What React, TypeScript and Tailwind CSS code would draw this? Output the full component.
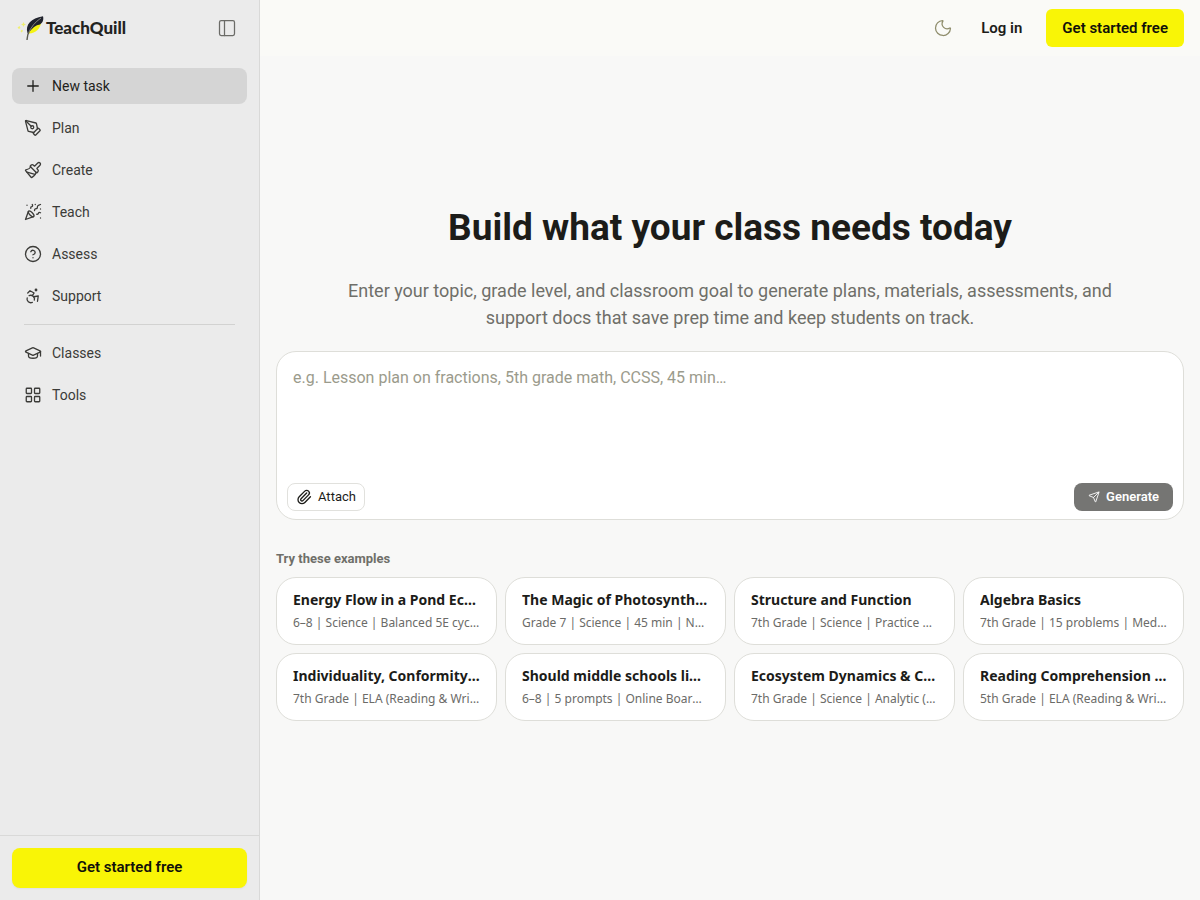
import {
  Accessibility,
  CircleHelp,
  GraduationCap,
  LayoutGrid,
  Moon,
  Paintbrush,
  PanelLeft,
  Paperclip,
  PartyPopper,
  PenTool,
  Plus,
  Send,
  type LucideIcon,
} from "lucide-react";

type NavItem = { label: string; icon: LucideIcon; active?: boolean };

const primaryNav: NavItem[] = [
  { label: "New task", icon: Plus, active: true },
  { label: "Plan", icon: PenTool },
  { label: "Create", icon: Paintbrush },
  { label: "Teach", icon: PartyPopper },
  { label: "Assess", icon: CircleHelp },
  { label: "Support", icon: Accessibility },
];

const secondaryNav: NavItem[] = [
  { label: "Classes", icon: GraduationCap },
  { label: "Tools", icon: LayoutGrid },
];

const examples = [
  { title: "Energy Flow in a Pond Ecosystem", meta: "6–8 | Science | Balanced 5E cycle lesson" },
  { title: "The Magic of Photosynthesis", meta: "Grade 7 | Science | 45 min | NGSS" },
  { title: "Structure and Function", meta: "7th Grade | Science | Practice worksheet" },
  { title: "Algebra Basics", meta: "7th Grade | 15 problems | Medium" },
  { title: "Individuality, Conformity & Society", meta: "7th Grade | ELA (Reading & Writing)" },
  { title: "Should middle schools limit phones?", meta: "6–8 | 5 prompts | Online Board discussion" },
  { title: "Ecosystem Dynamics & Change", meta: "7th Grade | Science | Analytic (4 levels)" },
  { title: "Reading Comprehension Quiz", meta: "5th Grade | ELA (Reading & Writing)" },
];

function Logo() {
  return (
    <a href="#" className="flex items-center gap-0.5 text-[#23231f]">
      <svg viewBox="0 0 28 28" className="h-7 w-7" aria-hidden="true">
        <path d="M12 20 C13 14 17 10 25 9 C24 15 20 19 13 19.500 Z" fill="#f4f313" />
        <path d="M11.500 19 C9 11 15 4 27 2.300 C28 6 26.500 9 24 10.500 C20 11 16 14 12.500 19 Z" fill="#20232d" />
        <path d="M25 4 C19 8 15 13 12 20" fill="none" stroke="#9a9a90" strokeWidth="0.8" />
        <path d="M13 18 C11.500 20 11.500 23 11 26" fill="none" stroke="#5b5b50" strokeWidth="1.4" />
        <path d="M7.500 8 L8.300 9.700 L10 10.500 L8.300 11.300 L7.500 13 L6.700 11.300 L5 10.500 L6.700 9.700Z M3.500 12 L4.500 14 L3 15 L1.500 13.500Z M6 15.500 L7 17 L5.500 18.500 L4.500 17Z" fill="#efef70" />
      </svg>
      <span className="font-['Lato'] text-[17px] font-black leading-7">TeachQuill</span>
    </a>
  );
}

function NavList({ items }: { items: NavItem[] }) {
  return (
    <ul className="flex flex-col gap-1.5">
      {items.map(({ label, icon: Icon, active }) => (
        <li key={label}>
          <a
            href="#"
            aria-current={active ? "page" : undefined}
            className={
              active
                ? "flex h-9 items-center gap-2.5 rounded-lg bg-[#d5d5d5] px-3 text-[#1f1f1c]"
                : "flex h-9 items-center gap-2.5 rounded-lg px-3 text-[#3b3b38] hover:bg-[#dededd]"
            }
          >
            <Icon size={18} strokeWidth={1.75} />
            {label}
          </a>
        </li>
      ))}
    </ul>
  );
}

export default function App() {
  return (
    <div className="flex min-h-screen bg-[#f8f8f7] font-['Roboto',sans-serif] text-[#1c1c19]">
      <aside className="flex w-65 shrink-0 flex-col border-r border-[#d9d9d8] bg-[#ebebeb] text-sm">
        <div className="flex h-14 items-center justify-between pl-4 pr-5.5">
          <Logo />
          <button type="button" aria-label="Collapse sidebar" className="text-[#6b6b67]">
            <PanelLeft size={20} strokeWidth={1.5} />
          </button>
        </div>
        <nav aria-label="Main" className="flex-1 px-3 pt-3">
          <NavList items={primaryNav} />
          <hr className="mx-3 my-2.5 border-[#d2d2d1]" />
          <NavList items={secondaryNav} />
        </nav>
        <div className="border-t border-[#d9d9d8] p-3">
          <button type="button" className="h-10 w-full rounded-lg bg-[#f9f506] text-[15px] font-semibold text-[#11110a] shadow-xs">
            Get started free
          </button>
        </div>
      </aside>

      <div className="flex min-w-0 flex-1 flex-col">
        <header className="flex h-14 items-center justify-end bg-[#fafaf7] px-4 text-[15px] font-semibold">
          <button type="button" aria-label="Dark mode" className="mr-7 text-[#8f8d6c]">
            <Moon size={20} strokeWidth={1.5} />
          </button>
          <a href="#" className="mr-6">
            Log in
          </a>
          <button type="button" className="h-9.5 rounded-md bg-[#f9f506] px-4 text-[#11110a]">
            Get started free
          </button>
        </header>

        <main className="flex flex-col px-4 pt-37 pb-10">
          <h1 className="text-center text-[37px] font-bold leading-12">Build what your class needs today</h1>
          <p className="mx-auto mt-[25px] max-w-200 text-center text-lg leading-[27px] text-[#6f6f69]">
            Enter your topic, grade level, and classroom goal to generate plans, materials, assessments, and support
            docs that save prep time and keep students on track.
          </p>

          <form
            className="mt-5 flex flex-col rounded-[20px] border border-[#deded9] bg-white"
            onSubmit={(event) => event.preventDefault()}
          >
            <textarea
              aria-label="Describe your task"
              placeholder="e.g. Lesson plan on fractions, 5th grade math, CCSS, 45 min…"
              className="h-31 resize-none bg-transparent px-4 pt-3.5 text-base leading-6 outline-none placeholder:text-[#9b9b8c]"
            />
            <div className="flex items-center justify-between px-2.5 pt-1.75 pb-2">
              <button
                type="button"
                className="flex h-7 items-center gap-1.5 rounded-lg border border-[#e1e1dd] px-2 text-[13px]"
              >
                <Paperclip size={16} strokeWidth={2} />
                Attach
              </button>
              <button
                type="submit"
                className="flex h-7 items-center gap-1.5 rounded-lg bg-[#757573] px-3.5 text-[13px] font-semibold text-white"
              >
                <Send size={12} strokeWidth={1.75} />
                Generate
              </button>
            </div>
          </form>

          <h2 className="mt-[29px] text-[13px] font-bold leading-5 text-[#6f6f69]">Try these examples</h2>
          <div className="mt-2 grid grid-cols-4 gap-2 font-['Noto_Sans',sans-serif]">
            {examples.map(({ title, meta }) => (
              <button
                key={title}
                type="button"
                className="min-w-0 rounded-[20px] border border-[#deded9] bg-white px-4 py-3 text-left"
              >
                <span className="block truncate text-sm font-bold leading-5">{title}</span>
                <span className="mt-1 block truncate text-xs leading-[18px] text-[#6b6b68]">{meta}</span>
              </button>
            ))}
          </div>
        </main>
      </div>
    </div>
  );
}
